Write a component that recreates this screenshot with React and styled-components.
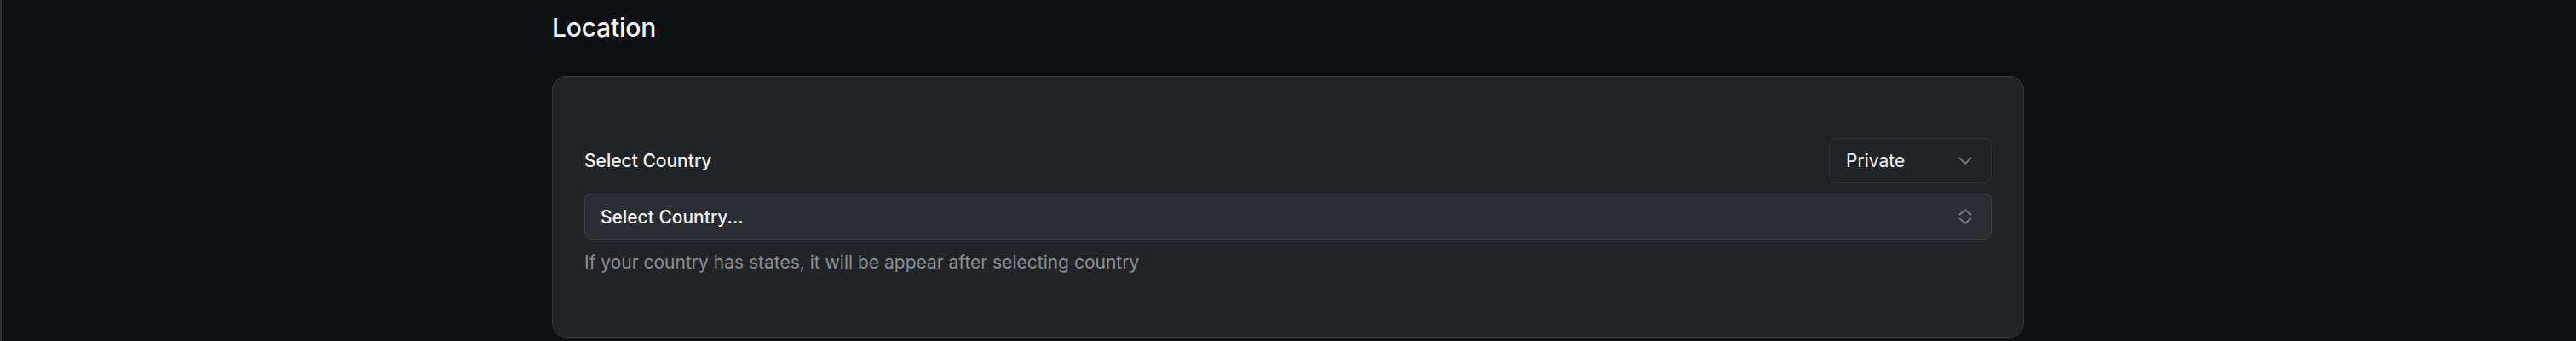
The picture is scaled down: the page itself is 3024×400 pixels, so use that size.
import styled, { createGlobalStyle } from "styled-components";

const GlobalStyle = createGlobalStyle`
  html, body {
    margin: 0;
    padding: 0;
    background: #0e1114;
  }

  body {
    font-family: Inter, "Noto Sans", "Liberation Sans", sans-serif;
    color: #f4f5f6;
  }
`;

export default function App() {
  return (
    <>
      <GlobalStyle />
      <Page>
        <Content>
          <Title>Location</Title>
          <Card>
            <FieldHeader>
              <Label>Select Country</Label>
              <VisibilityButton>
                <span>Private</span>
                <ChevronDown />
              </VisibilityButton>
            </FieldHeader>
            <SelectBox>
              <span>Select Country...</span>
              <ChevronsUpDown />
            </SelectBox>
            <Hint>If your country has states, it will be appear after selecting country</Hint>
          </Card>
        </Content>
      </Page>
    </>
  );
}

const ChevronDown = () => (
  <IconSvg width="16" height="10" viewBox="0 0 16 10">
    <path d="M1.5 1.5 8 7.8l6.5-6.3" />
  </IconSvg>
);

const ChevronsUpDown = () => (
  <IconSvg width="16" height="18" viewBox="0 0 16 18">
    <path d="M1.5 6.5 8 1.2l6.5 5.3" />
    <path d="M1.5 11.5 8 16.8l6.5-5.3" />
  </IconSvg>
);

const Page = styled.div`
  min-height: 400px;
  box-shadow: inset 2px 0 0 #2e3235;
  box-sizing: border-box;
  padding-top: 14px;
`;

const Content = styled.div`
  max-width: 1728px;
  margin: 0 auto;
`;

const Title = styled.h2`
  margin: 0 0 39px;
  font-size: 30px;
  line-height: 36px;
  font-weight: 500;
  letter-spacing: -0.2px;
  color: #f7f8f8;
`;

const Card = styled.div`
  background: #212427;
  border: 1px solid #33373b;
  border-radius: 17px;
  padding: 72px 37px 71px;
`;

const FieldHeader = styled.div`
  display: flex;
  align-items: center;
  justify-content: space-between;
  margin-bottom: 12px;
`;

const Label = styled.label`
  font-size: 21px;
  font-weight: 500;
  color: #f2f3f4;
`;

const VisibilityButton = styled.button`
  display: flex;
  align-items: center;
  justify-content: space-between;
  width: 191px;
  height: 53px;
  box-sizing: border-box;
  padding: 0 22px 0 19px;
  background: #212427;
  border: 1px solid #2d3135;
  border-radius: 9px;
  font-family: inherit;
  font-size: 21px;
  color: #f2f3f4;
`;

const SelectBox = styled.div`
  display: flex;
  align-items: center;
  justify-content: space-between;
  height: 54px;
  box-sizing: border-box;
  padding: 0 22px 0 18px;
  background: #2a2d31;
  border: 1px solid #3a3e42;
  border-radius: 8px;
  font-size: 21px;
  font-weight: 500;
  color: #f2f3f4;
`;

const Hint = styled.p`
  margin: 10px 0 0;
  font-size: 21px;
  line-height: 33px;
  color: #8b8e92;
`;

const IconSvg = styled.svg`
  fill: none;
  stroke: #7e8286;
  stroke-width: 1.8;
  stroke-linecap: round;
  stroke-linejoin: round;
  flex-shrink: 0;
`;
